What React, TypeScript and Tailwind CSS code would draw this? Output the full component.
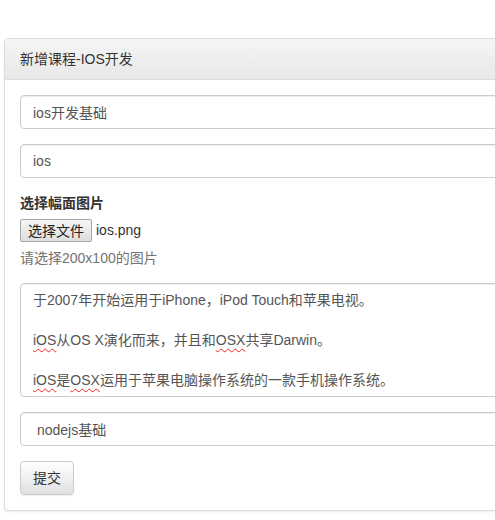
const font = "font-['Liberation_Sans','Noto_Sans_CJK_SC',sans-serif]";

const inputCls =
  "block h-[34px] w-full rounded-[4px] border border-[#ccc] bg-white px-3 text-[14px] leading-5 text-[#555] shadow-[inset_0_1px_1px_rgba(0,0,0,0.075)] outline-none " +
  font;

function Squiggle({ children }: { children: React.ReactNode }) {
  return (
    <span className="underline decoration-wavy decoration-[#e22] decoration-1 underline-offset-[3px]">
      {children}
    </span>
  );
}

export default function App() {
  return (
    <div className={`h-[520px] w-full overflow-hidden bg-white pl-[4px] pt-[38px] ${font}`}>
      {/* panel runs past the right edge of the window */}
      <div className="w-[540px] rounded-[4px] border border-[#ddd] bg-white shadow-[0_1px_2px_rgba(0,0,0,0.075)]">
        <div className="rounded-t-[3px] border-b border-[#ddd] bg-gradient-to-b from-[#f5f5f5] to-[#e8e8e8] px-[15px] py-[10px] text-[14px] leading-5 text-[#333]">
          新增课程-IOS开发
        </div>

        <div className="flex flex-col p-[15px]">
          <input className={inputCls} readOnly value="ios开发基础" />
          <input className={`${inputCls} mt-[15px]`} readOnly value="ios" />

          <div className="mt-[15px] text-[14px] font-bold leading-5 text-[#333]">选择幅面图片</div>
          <div className="mt-[5px] flex h-[25px] items-center gap-[4px] text-[14px] text-[#333]">
            <button className="h-[23px] rounded-[2px] border border-[#a6a6a6] bg-gradient-to-b from-[#f6f6f6] to-[#dedede] px-[7px] text-[14px] leading-none text-[#222]">
              选择文件
            </button>
            <span>ios.png</span>
          </div>
          <div className="mt-[5px] text-[14px] leading-5 text-[#737373]">请选择200x100的图片</div>

          <div className="mt-[15px] h-[114px] rounded-[4px] border border-[#ccc] bg-white px-3 py-[6px] text-[14px] leading-5 text-[#555] shadow-[inset_0_1px_1px_rgba(0,0,0,0.075)]">
            <div>于2007年开始运用于iPhone，iPod Touch和苹果电视。</div>
            <div>&nbsp;</div>
            <div>
              <Squiggle>iOS</Squiggle>从OS X演化而来，并且和<Squiggle>OSX</Squiggle>共享Darwin。
            </div>
            <div>&nbsp;</div>
            <div>
              <Squiggle>iOS</Squiggle>是<Squiggle>OSX</Squiggle>运用于苹果电脑操作系统的一款手机操作系统。
            </div>
          </div>

          <input className={`${inputCls} mt-[15px] whitespace-pre`} readOnly value=" nodejs基础" />

          <div className="mt-[15px]">
            <button className="h-[34px] rounded-[4px] border border-[#ccc] bg-gradient-to-b from-white to-[#e0e0e0] px-3 text-[14px] leading-5 text-[#333] shadow-[inset_0_1px_0_rgba(255,255,255,0.15),0_1px_1px_rgba(0,0,0,0.075)]">
              提交
            </button>
          </div>
        </div>
      </div>
    </div>
  );
}
